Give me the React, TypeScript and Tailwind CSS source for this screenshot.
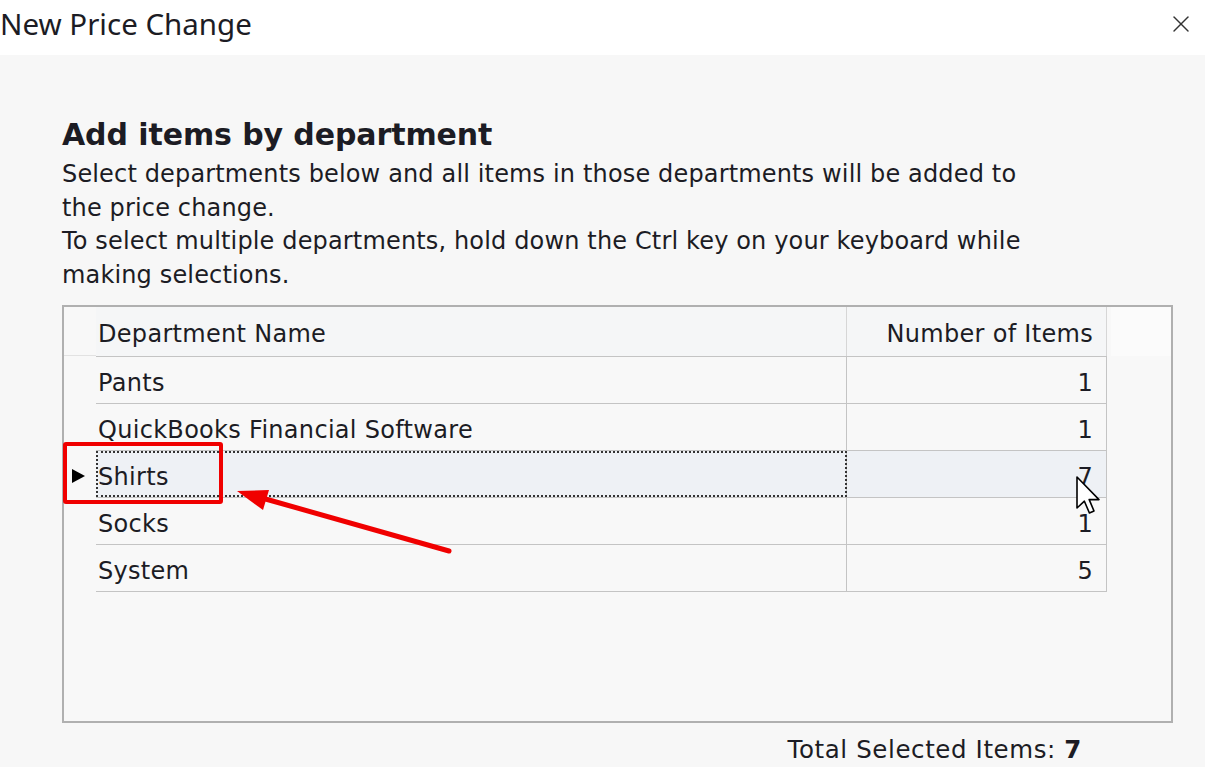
import { X } from "lucide-react";

interface Department {
  name: string;
  count: number;
}

const departments: Department[] = [
  { name: "Pants", count: 1 },
  { name: "QuickBooks Financial Software", count: 1 },
  { name: "Shirts", count: 7 },
  { name: "Socks", count: 1 },
  { name: "System", count: 5 },
];

const SELECTED = "Shirts";

const tahoma = { fontFamily: '"DejaVu Sans", Tahoma, Verdana, sans-serif' };

export default function App() {
  const total = departments.filter((d) => d.name === SELECTED).reduce((n, d) => n + d.count, 0);

  return (
    <div className="relative w-[1205px] h-[767px] overflow-hidden bg-[#f7f7f7] text-[#1c1c24]">
      {/* Dialog title bar */}
      <div className="h-[55px] bg-white flex items-start justify-between">
        <h1
          className="pt-[4px] text-[29.5px] leading-[40px]"
          style={{ fontFamily: '"Noto Sans", "Open Sans", sans-serif' }}
        >
          New Price Change
        </h1>
        <button className="mt-[10px] mr-[10px] text-[#333]">
          <X className="w-[28px] h-[28px]" strokeWidth={1.2} />
        </button>
      </div>

      {/* Intro */}
      <div className="pl-[62px] pt-[63px]" style={tahoma}>
        <h2 className="text-[30px] leading-[34px] font-bold tracking-[-0.1px]">Add items by department</h2>
        <div className="pt-[6px] text-[24px] leading-[33.5px] tracking-[0.15px]">
          <p>Select departments below and all items in those departments will be added to</p>
          <p>the price change.</p>
          <p>To select multiple departments, hold down the Ctrl key on your keyboard while</p>
          <p>making selections.</p>
        </div>
      </div>

      {/* Departments grid */}
      <div
        className="ml-[62px] mt-[13px] w-[1111px] h-[418px] border-2 border-[#b0b0b0] bg-[#f8f8f8] flex"
        style={tahoma}
      >
        <div className="w-[32px] shrink-0 flex flex-col">
          <div className="h-[49px] border-b border-[#e2e2e2]" />
          {departments.map((d) => (
            <div key={d.name} className="h-[47px] flex items-center pl-[7px] pt-[4px]">
              {d.name === SELECTED && (
                <svg width="15" height="16" viewBox="0 0 15 16">
                  <path d="M1 1 L14 8 L1 15 Z" fill="#000" />
                </svg>
              )}
            </div>
          ))}
        </div>

        <div className="w-[1011px] shrink-0 flex flex-col text-[24px] tracking-[0.3px]">
          <div className="h-[49px] flex bg-[#f5f6f7]">
            <div className="w-[751px] pl-[2px] pt-[5px] flex items-center border-r border-[#d6d6d6]">
              Department Name
            </div>
            <div className="flex-1 pr-[13px] pt-[5px] flex items-center justify-end border-r border-[#d6d6d6]">
              Number of Items
            </div>
          </div>
          {departments.map((d) => {
            const selected = d.name === SELECTED;
            return (
              <div
                key={d.name}
                className={`h-[47px] flex border-t border-[#c4c4c4] ${selected ? "bg-[#eef1f5]" : ""}`}
              >
                <div
                  className={`w-[751px] pl-[2px] pt-[5px] flex items-center border-r border-[#c4c4c4] ${
                    selected ? "outline-2 outline-dotted outline-[#333] -outline-offset-2" : ""
                  }`}
                >
                  {d.name}
                </div>
                <div className="flex-1 pr-[13px] pt-[5px] flex items-center justify-end border-r border-[#c4c4c4]">
                  {d.count}
                </div>
              </div>
            );
          })}
          <div className="border-t border-[#c4c4c4] w-[1011px]" />
        </div>

        <div className="flex-1 flex flex-col">
          <div className="h-[49px] ml-[4px] bg-[#fbfbfb]" />
        </div>
      </div>

      {/* Footer total */}
      <div className="flex justify-end pr-[123px] pt-[9px] text-[24.5px] tracking-[0.6px]" style={tahoma}>
        <span>
          Total Selected Items: <b>{total}</b>
        </span>
      </div>

      {/* Annotation: highlight box and arrow */}
      <div className="absolute left-[63px] top-[442px] w-[160px] h-[62px] border-4 border-[#f00000] rounded-[3px]" />
      <svg className="absolute left-0 top-0 pointer-events-none" width="1205" height="767">
        <line x1="449" y1="551" x2="262" y2="498" stroke="#f00000" strokeWidth="5" strokeLinecap="round" />
        <path d="M237 491 L269 490 L263 510 Z" fill="#f00000" />
      </svg>

      {/* Mouse pointer */}
      <svg className="absolute left-[1076px] top-[476px]" width="28" height="40" viewBox="0 0 14 20">
        <path
          d="M0.5 0.5 L0.5 16 L4.2 12.6 L6.7 18.5 L9 17.5 L6.6 11.8 L11.5 11.8 Z"
          fill="#fff"
          stroke="#000"
          strokeWidth="0.8"
          strokeLinejoin="round"
        />
      </svg>
    </div>
  );
}
